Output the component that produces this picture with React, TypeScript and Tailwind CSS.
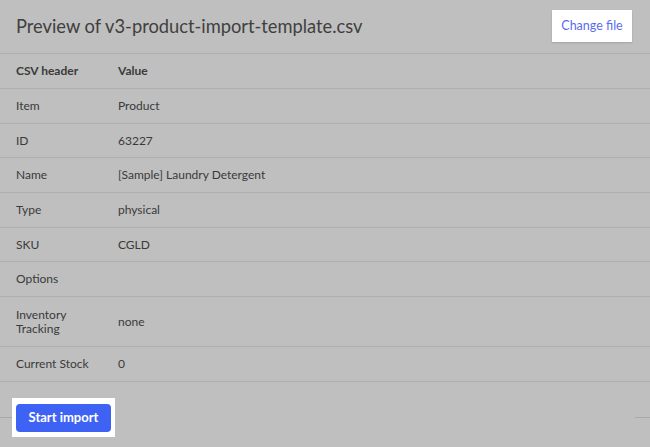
import * as React from 'react';

const rows: { label: string; value: string; tall?: boolean }[] = [
  { label: 'Item', value: 'Product' },
  { label: 'ID', value: '63227' },
  { label: 'Name', value: '[Sample] Laundry Detergent' },
  { label: 'Type', value: 'physical' },
  { label: 'SKU', value: 'CGLD' },
  { label: 'Options', value: '' },
  { label: 'Inventory Tracking', value: 'none', tall: true },
  { label: 'Current Stock', value: '0' },
];

export default function App() {
  return (
    <div
      className="w-[650px] h-[447px] bg-[#bfbfbf] text-[#3a3a3a] overflow-hidden"
      style={{ fontFamily: 'Lato, "Open Sans", sans-serif' }}
    >
      {/* header */}
      <div className="h-[54px] flex items-center justify-between pl-4 pr-[18px] border-b border-[#afafaf]">
        <h1 className="text-[18.3px] text-[#404040] font-normal">Preview of v3-product-import-template.csv</h1>
        <div className="bg-white w-[80px] h-[32px] flex items-center justify-center shadow-[0_1px_2px_rgba(0,0,0,0.15)] -mt-[1px]">
          <span className="text-[12.5px] text-[#5a6cf0]">Change file</span>
        </div>
      </div>

      {/* table */}
      <div className="flex items-center h-[35px] border-b border-[#afafaf] text-[12px] font-bold">
        <div className="w-[118px] pl-4">CSV header</div>
        <div>Value</div>
      </div>
      {rows.map((r) => (
        <div
          key={r.label}
          className={`flex items-center border-b border-[#afafaf] text-[12px] ${r.tall ? 'h-[50px]' : 'h-[34.7px]'}`}
        >
          <div className="w-[118px] pl-4 pr-4 leading-[14px]">{r.label}</div>
          <div>{r.value}</div>
        </div>
      ))}

      {/* footer */}
      <div className="flex items-center mt-[16px]">
        <div className="w-[12px] border-t border-[#a9a9a9]" />
        <div className="bg-white p-[4px] pt-[6px] pb-[5px]">
          <button className="h-[28px] w-[95px] rounded-[4px] bg-[#3e63f4] text-white text-[13px] font-bold">
            Start import
          </button>
        </div>
        <div className="flex-1" />
        <div className="w-[15px] border-t border-[#a9a9a9]" />
      </div>
    </div>
  );
}
